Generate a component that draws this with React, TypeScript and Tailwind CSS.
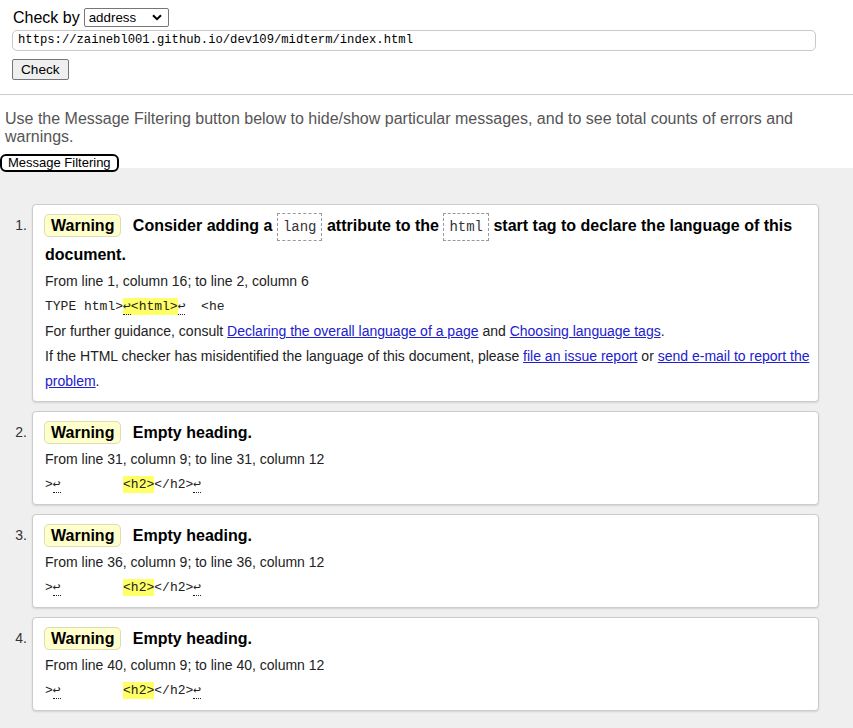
const sans = "font-['Liberation_Sans',Arial,sans-serif]";
const mono = "font-['Liberation_Mono','DejaVu_Sans_Mono',monospace]";

function Lf() {
  return <span className="border-b border-dotted border-[#222]">↩</span>;
}

function Hl({ children }: { children: React.ReactNode }) {
  return <span className="bg-[#ffff66] py-[1px]">{children}</span>;
}

function Code({ children }: { children: React.ReactNode }) {
  return (
    <code
      className={`${mono} text-[14px] leading-none font-normal text-[#333] border border-dashed border-[#999] px-[5px] py-[5px]`}
    >
      {children}
    </code>
  );
}

function A({ children }: { children: React.ReactNode }) {
  return (
    <a href="#" className="text-[#2020d0] underline">
      {children}
    </a>
  );
}

const h2Extract = (
  <>
    &gt;
    <Lf />
    {"        "}
    <Hl>&lt;h2&gt;</Hl>
    &lt;/h2&gt;
    <Lf />
  </>
);

const messages = [
  {
    title: (
      <>
        Consider adding a <Code>lang</Code> attribute to the <Code>html</Code>{" "}
        start tag to declare the language of this document.
      </>
    ),
    from: "From line 1, column 16; to line 2, column 6",
    extract: (
      <>
        TYPE html&gt;
        <Hl>
          <Lf />
          &lt;html&gt;
        </Hl>
        <Lf />
        {"  <he"}
      </>
    ),
    extra: (
      <>
        <p>
          For further guidance, consult{" "}
          <A>Declaring the overall language of a page</A> and{" "}
          <A>Choosing language tags</A>.
        </p>
        <p>
          If the HTML checker has misidentified the language of this document,
          please <A>file an issue report</A> or{" "}
          <A>send e-mail to report the problem</A>.
        </p>
      </>
    ),
  },
  {
    title: <>Empty heading.</>,
    from: "From line 31, column 9; to line 31, column 12",
    extract: h2Extract,
  },
  {
    title: <>Empty heading.</>,
    from: "From line 36, column 9; to line 36, column 12",
    extract: h2Extract,
  },
  {
    title: <>Empty heading.</>,
    from: "From line 40, column 9; to line 40, column 12",
    extract: h2Extract,
  },
];

export default function App() {
  return (
    <div className={`${sans} h-screen overflow-hidden flex flex-col bg-white text-black`}>
      {/* Check form */}
      <div className="px-[12px] pt-[8px] pb-[14px] border-b border-[#ccc] flex flex-col items-start">
        <div className="flex items-center gap-[4px] h-[19px]">
          <span className="text-[16px] leading-[19px] pl-[1px]">Check by</span>
          <div className="w-[85px] h-[19px] border border-[#767676] rounded-[2px] bg-white flex items-center justify-between pl-[4px] pr-[6px] text-[13.33px] leading-[15px]">
            <span>address</span>
            <svg width="10" height="7" viewBox="0 0 10 7">
              <path d="M1 1.2 L5 5.2 L9 1.2" fill="none" stroke="#000" strokeWidth="2" />
            </svg>
          </div>
        </div>
        <div
          className={`${mono} mt-[3px] w-[804px] h-[21px] border border-[#c9c9c9] rounded-[5px] pl-[5px] flex items-center text-[12.2px] leading-[15px]`}
        >
          https://zainebl001.github.io/dev109/midterm/index.html
        </div>
        <button className="mt-[8px] h-[21px] px-[8px] text-[13.6px] leading-[15px] bg-[#efefef] border border-[#767676] rounded-[2px]">
          Check
        </button>
      </div>

      {/* Filter info */}
      <p className="mt-[15px] pl-[5px] pr-[4px] text-[16px] leading-[18px] text-[#555]">
        Use the Message Filtering button below to hide/show particular messages,
        and to see total counts of errors and warnings.
      </p>
      <div className="mt-[8px] -mb-[4px] relative z-10 flex">
        <button className="h-[18px] px-[6px] text-[13px] leading-[14px] bg-white border-2 border-black rounded-[6px]">
          Message Filtering
        </button>
      </div>

      {/* Results */}
      <div className="flex-1 bg-[#efefef] pt-[36px] pr-[34px] pb-[17px]">
        <ol className="flex flex-col gap-[9px]">
          {messages.map((m, i) => (
            <li key={i} className="flex items-start">
              <span className="w-[32px] shrink-0 text-right pr-[5px] text-[14px] text-[#333] mt-[7px] leading-[29px]">
                {i + 1}.
              </span>
              <div className="flex-1 bg-white border border-[#ccc] rounded-[4px] shadow-[0_1px_2px_rgba(0,0,0,0.12)] pl-[12px] pr-[4px] pt-[6px] pb-[7px]">
                <p className="text-[16px] font-bold leading-[29px]">
                  <span className="leading-none bg-[#ffffcc] border border-[#dcdcb8] rounded-[5px] px-[6px] py-[2px] mr-[7px] -ml-[1px]">
                    Warning
                  </span>{" "}
                  {m.title}
                </p>
                <div className="text-[14px] leading-[25px] text-[#222]">
                  <p>{m.from}</p>
                  <p className={`${mono} text-[13px] whitespace-pre text-[#222]`}>
                    {m.extract}
                  </p>
                  {m.extra}
                </div>
              </div>
            </li>
          ))}
        </ol>
      </div>
    </div>
  );
}
